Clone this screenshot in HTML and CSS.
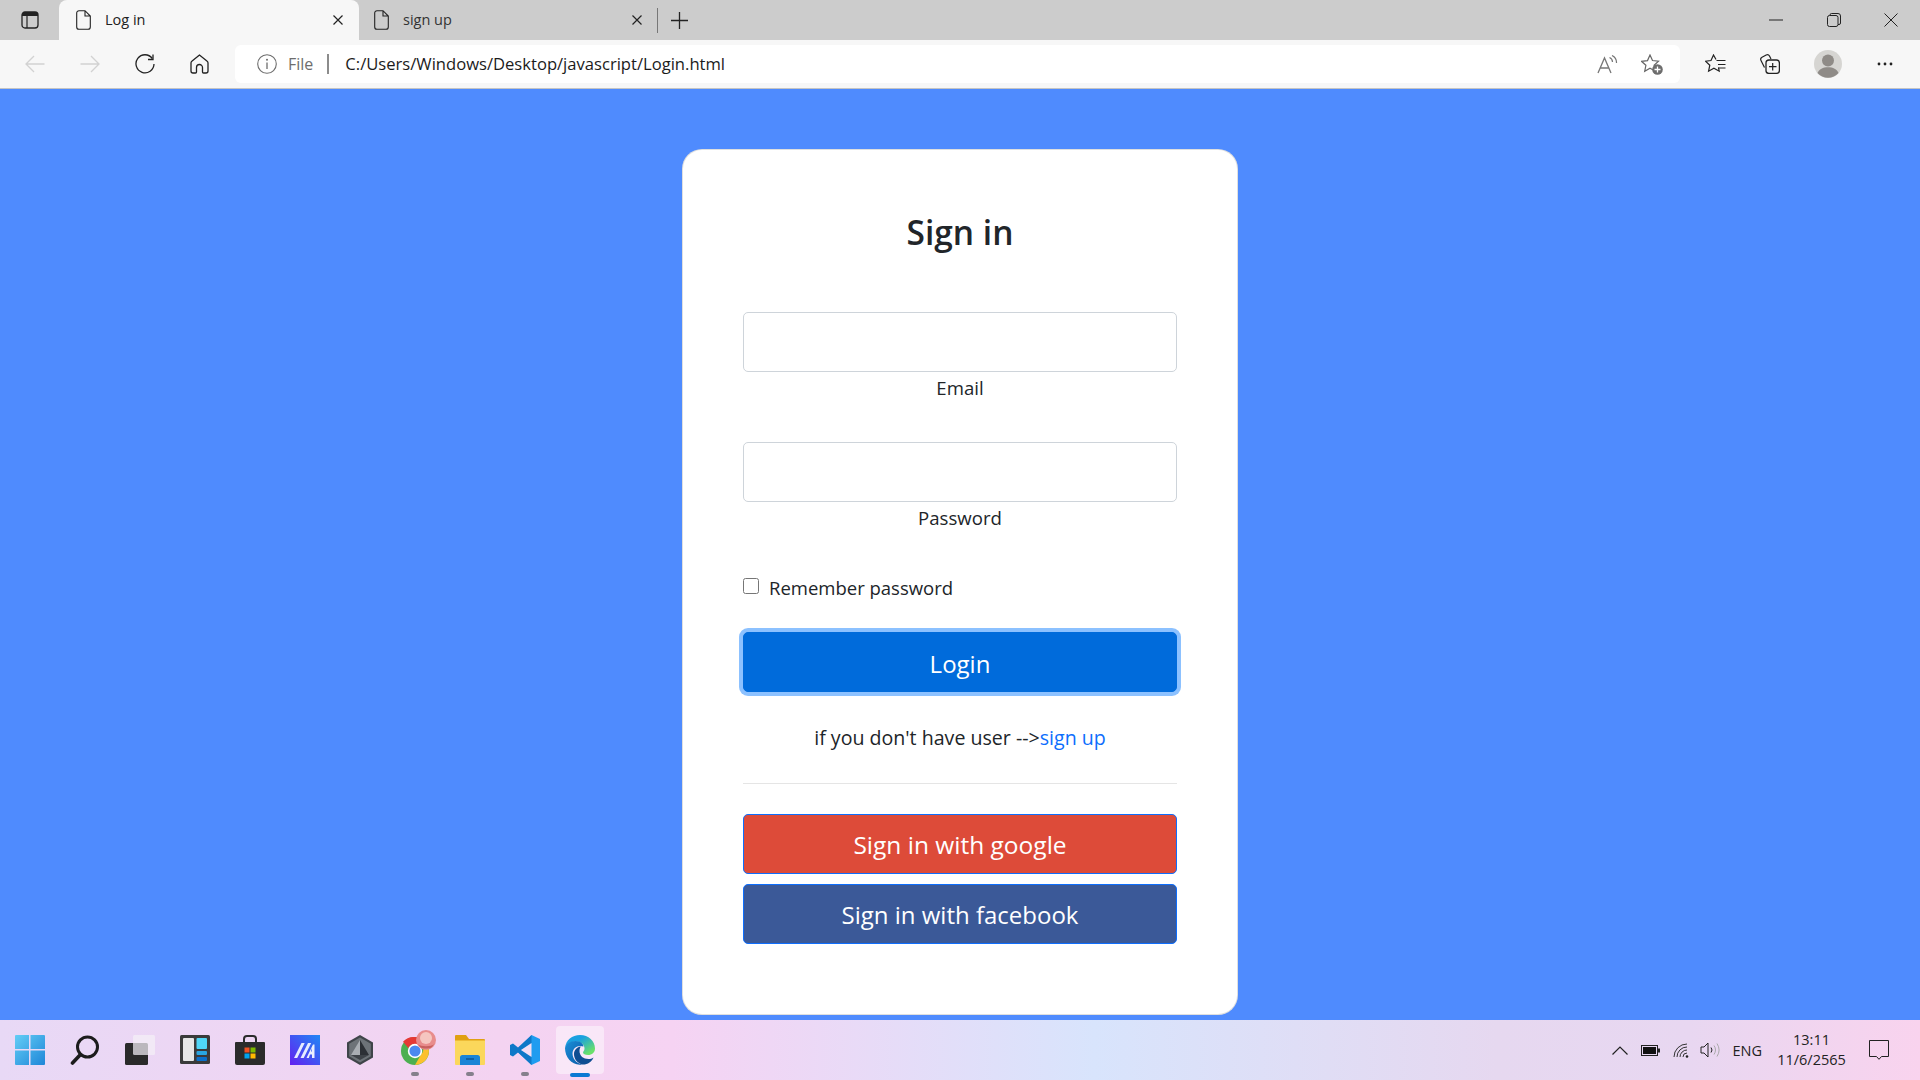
FILE: index.html
```html
<!DOCTYPE html>
<html lang="en">
<head>
  <meta charset="UTF-8" />
  <meta name="viewport" content="width=device-width, initial-scale=1.0"/>
  <title>Log in</title>
  <link rel="stylesheet" href="styles.css">
</head>
<body>
  <header class="tab-strip">
    <div class="sidebar-btn">
      <svg width="18" height="18" viewBox="0 0 18 18"><rect x="1" y="1" width="16" height="16" rx="3" fill="none" stroke="#222" stroke-width="1.3"/><path d="M1 5V4a3 3 0 0 1 3-3h10a3 3 0 0 1 3 3v1z" fill="#222"/><path d="M6 5v12" stroke="#222" stroke-width="1.2"/></svg>
    </div>
    <div class="tab tab-active">
      <svg class="page-icon" width="15" height="20" viewBox="0 0 15 20"><path d="M3 .7h6l5.300 5.300V17a2.300 2.300 0 0 1-2.300 2.300H3A2.300 2.300 0 0 1 .7 17V3A2.300 2.300 0 0 1 3 .7zM9 .7V6h5.300" fill="none" stroke="#222" stroke-width="1.1"/></svg>
      <span class="tab-title">Log in</span>
      <svg class="tab-close" width="10" height="10" viewBox="0 0 10 10"><path d="M.5.5l9 9M9.500.5l-9 9" stroke="#222" stroke-width="1.200"/></svg>
    </div>
    <div class="tab">
      <svg class="page-icon" width="15" height="20" viewBox="0 0 15 20"><path d="M3 .7h6l5.300 5.300V17a2.300 2.300 0 0 1-2.300 2.300H3A2.300 2.300 0 0 1 .7 17V3A2.300 2.300 0 0 1 3 .7zM9 .7V6h5.300" fill="none" stroke="#222" stroke-width="1.1"/></svg>
      <span class="tab-title">sign up</span>
      <svg class="tab-close" width="10" height="10" viewBox="0 0 10 10"><path d="M.5.5l9 9M9.500.5l-9 9" stroke="#222" stroke-width="1.200"/></svg>
    </div>
    <div class="tab-sep"></div>
    <div class="new-tab">
      <svg width="17" height="17" viewBox="0 0 17 17"><path d="M8.500 0v17M0 8.500h17" stroke="#222" stroke-width="1.300"/></svg>
    </div>
    <div class="window-btns">
      <div class="window-btn"><svg width="14" height="14" viewBox="0 0 14 14"><path d="M0 7h14" stroke="#222" stroke-width="1"/></svg></div>
      <div class="window-btn"><svg width="14" height="14" viewBox="0 0 14 14"><rect x=".5" y="2.500" width="10.500" height="11" rx="2" fill="none" stroke="#222"/><path d="M3 2.500V2a1.500 1.500 0 0 1 1.500-1.500H11A2.500 2.500 0 0 1 13.500 3v7a1.500 1.500 0 0 1-1.500 1.500h-1" fill="none" stroke="#222"/></svg></div>
      <div class="window-btn"><svg width="14" height="14" viewBox="0 0 14 14"><path d="M.5.5l13 13M13.500.5l-13 13" stroke="#222" stroke-width="1"/></svg></div>
    </div>
  </header>

  <nav class="toolbar">
    <div class="nav-btn"><svg width="20" height="18" viewBox="0 0 20 18"><path d="M19.500 9H1M9 1L1 9l8 8" fill="none" stroke="#d2d2d2" stroke-width="1.300"/></svg></div>
    <div class="nav-btn"><svg width="20" height="18" viewBox="0 0 20 18"><path d="M.5 9H19M11 1l8 8-8 8" fill="none" stroke="#d2d2d2" stroke-width="1.300"/></svg></div>
    <div class="nav-btn"><svg width="20" height="20" viewBox="0 0 20 20"><path d="M17.300 4.500A9 9 0 1 0 19 10" fill="none" stroke="#222" stroke-width="1.300"/><path d="M18 .5v5h-5" fill="none" stroke="#222" stroke-width="1.300"/></svg></div>
    <div class="nav-btn"><svg width="19" height="20" viewBox="0 0 19 20"><path d="M9.500 1L1.800 7.300A2 2 0 0 0 1 8.900V17a2 2 0 0 0 2 2h2.500a1 1 0 0 0 1-1v-4.500a3 3 0 0 1 6 0V18a1 1 0 0 0 1 1H16a2 2 0 0 0 2-2V8.900a2 2 0 0 0-.8-1.600z" fill="none" stroke="#222" stroke-width="1.300"/></svg></div>

    <div class="address-bar">
      <svg width="20" height="20" viewBox="0 0 20 20"><circle cx="10" cy="10" r="9.300" fill="none" stroke="#6d6d6d" stroke-width="1.100"/><path d="M10 8.500V15" stroke="#6d6d6d" stroke-width="1.300"/><circle cx="10" cy="5.700" r="1" fill="#6d6d6d"/></svg>
      <span class="scheme">File</span>
      <span class="scheme-sep"></span>
      <span class="url">C:/Users/Windows/Desktop/javascript/Login.html</span>
      <div class="address-icons">
        <svg width="21" height="19" viewBox="0 0 21 19"><path d="M1 18L7.500 3 14 18M3.300 13h8.400" fill="none" stroke="#777" stroke-width="1.300"/><path d="M12.500 2.500a5 5 0 0 1 3 4.500M15 .5a8 8 0 0 1 4.500 7.500" fill="none" stroke="#777" stroke-width="1.200"/></svg>
        <svg width="22" height="21" viewBox="0 0 22 21"><path d="M9 1l2.500 5.500 6 .7-4.400 4 1.200 6L9 14.300 3.700 17.300l1.200-6-4.400-4 6-.7z" fill="none" stroke="#666" stroke-width="1.200"/><circle cx="16.500" cy="15.500" r="5.300" fill="#6d6d6d"/><path d="M16.500 12.500v6M13.500 15.500h6" stroke="#fff" stroke-width="1.300"/></svg>
      </div>
    </div>

    <div class="toolbar-right">
      <div class="tool-btn"><svg width="21" height="20" viewBox="0 0 21 20"><path d="M11 5.500L8.500 1 6 6.500l-5.500.7 4.300 4-1.200 6 5.300-3 5.300 3-.7-3.500" fill="none" stroke="#222" stroke-width="1.200"/><path d="M11.500 6.500h9M13 10.500h7.500M13 14h7.500" stroke="#222" stroke-width="1.200"/></svg></div>
      <div class="tool-btn tool-collections"><svg width="20" height="20" viewBox="0 0 20 20"><path d="M4.500 13.500L1 6.500A2.500 2.500 0 0 1 2 3.200L6.200 1a2.500 2.500 0 0 1 3.300 1l1.500 3" fill="none" stroke="#222" stroke-width="1.200"/><rect x="6" y="6" width="13.400" height="13.400" rx="3" fill="none" stroke="#222" stroke-width="1.300"/><path d="M12.700 9v7.500M9 12.700h7.500" stroke="#222" stroke-width="1.200"/></svg></div>
      <div class="tool-btn tool-avatar"><svg width="28" height="28" viewBox="0 0 28 28"><circle cx="14" cy="14" r="14" fill="#d6d5d2"/><circle cx="14" cy="10.500" r="6" fill="#8f8b87"/><path d="M3.500 23c1.500-4 5.500-5.800 10.500-5.800s9 1.800 10.500 5.800a14 14 0 0 1-21 0z" fill="#8f8b87"/></svg></div>
      <div class="tool-btn"><svg width="16" height="4" viewBox="0 0 16 4"><circle cx="2" cy="2" r="1.400" fill="#222"/><circle cx="8" cy="2" r="1.400" fill="#222"/><circle cx="14" cy="2" r="1.400" fill="#222"/></svg></div>
    </div>
  </nav>

  <main class="page">
    <form class="card">
      <h3 class="card-title">Sign in</h3>
      <div class="field">
        <input type="email" id="email" class="form-control" />
        <label for="email">Email</label>
      </div>
      <div class="field">
        <input type="password" id="password" class="form-control" />
        <label for="password">Password</label>
      </div>
      <div class="remember">
        <input type="checkbox" id="remember" />
        <label for="remember">Remember password</label>
      </div>
      <button type="button" class="btn btn-login">Login</button>
      <p class="signup-text">if you don't have user --&gt;<a href="#">sign up</a></p>
      <hr class="divider" />
      <button type="button" class="btn btn-google">Sign in with google</button>
      <button type="button" class="btn btn-facebook">Sign in with facebook</button>
    </form>
  </main>

  <footer class="taskbar">
    <div class="task-item">
      <svg width="30" height="30" viewBox="0 0 30 30">
        <defs><linearGradient id="win" x1="0" y1="0" x2="1" y2="1"><stop offset="0" stop-color="#63cdf6"/><stop offset="1" stop-color="#1f86d8"/></linearGradient></defs>
        <path d="M1 0h13v14H0V1a1 1 0 0 1 1-1zM15.500 0H29a1 1 0 0 1 1 1v13H15.500zM0 15.500h14V30H1a1 1 0 0 1-1-1zM15.500 15.500H30V29a1 1 0 0 1-1 1H15.500z" fill="url(#win)"/>
      </svg>
    </div>
    <div class="task-item">
      <svg width="30" height="30" viewBox="0 0 30 30"><circle cx="17.500" cy="12" r="10" fill="none" stroke="#1c1c1c" stroke-width="3"/><path d="M10.500 19.500L2.500 28" stroke="#1c1c1c" stroke-width="3.600" stroke-linecap="round"/></svg>
    </div>
    <div class="task-item">
      <svg width="30" height="30" viewBox="0 0 30 30"><rect x="0" y="8" width="23" height="22" rx="1.500" fill="#2a2a2a"/><rect x="8" y="0" width="22" height="20" rx="1.500" fill="#f4f0f6" fill-opacity=".72"/></svg>
    </div>
    <div class="task-item">
      <svg width="30" height="30" viewBox="0 0 30 30"><rect width="30" height="29" rx="1.500" fill="#3a3a3a"/><rect x="3" y="3" width="11" height="23" rx="1" fill="#e6e6e6"/><rect x="16.500" y="3" width="10.500" height="11" rx="1" fill="#4fd6f6"/><rect x="16.500" y="16" width="10.500" height="4" rx="1" fill="#29a5e0"/><rect x="16.500" y="22" width="10.500" height="4" rx="1" fill="#0a6fc9"/></svg>
    </div>
    <div class="task-item">
      <svg width="30" height="30" viewBox="0 0 30 30"><path d="M9 8V4a3 3 0 0 1 3-3h6a3 3 0 0 1 3 3v4" fill="none" stroke="#2b2b2b" stroke-width="2"/><path d="M1 7h28a1 1 0 0 1 1 1v20a2 2 0 0 1-2 2H2a2 2 0 0 1-2-2V8a1 1 0 0 1 1-1z" fill="#2b2b2b"/><rect x="9.500" y="12.500" width="5" height="5" fill="#f25022"/><rect x="15.500" y="12.500" width="5" height="5" fill="#7fba00"/><rect x="9.500" y="18.500" width="5" height="5" fill="#00a4ef"/><rect x="15.500" y="18.500" width="5" height="5" fill="#ffb900"/></svg>
    </div>
    <div class="task-item">
      <svg width="30" height="30" viewBox="0 0 30 30">
        <defs><linearGradient id="nxt" x1="1" y1="0" x2="0" y2="1"><stop offset="0" stop-color="#2188f5"/><stop offset="1" stop-color="#6320f0"/></linearGradient></defs>
        <rect width="30" height="30" fill="url(#nxt)"/>
        <path d="M4 23L11.500 8h3.200L7.200 23zM10.500 23L18 8h3.200l-7.500 15z" fill="#e6ecff"/><path d="M16.500 23L23 9.500h1.500V23h-2.500v-3.500h-2L18.800 23zM21 16.500h1V13z" fill="#fff" fill-opacity=".9" fill-rule="evenodd"/>
      </svg>
    </div>
    <div class="task-item">
      <svg width="28" height="30" viewBox="0 0 28 30"><path d="M14 0l13 7.500v15L14 30 1 22.500v-15z" fill="#3f4449"/><path d="M14 2.500l10.800 6.200v12.600L14 27.500 3.200 21.300V8.700z" fill="#6d7378"/><path d="M14 5L5 20h9z" fill="#a9aeb3"/><path d="M14 5l9 15h-9z" fill="#2c3035"/><path d="M5 20h18l-9 5z" fill="#3e4348"/></svg>
    </div>
    <div class="task-item task-running">
      <svg class="chrome-icon" width="36" height="36" viewBox="0 0 36 36">
        <circle cx="14" cy="21" r="14" fill="#4caf50"/>
        <path d="M14 7a14 14 0 0 1 12.100 7H14a7 7 0 0 0-6.500 4.300L2 11.700A14 14 0 0 1 14 7z" fill="#e53935"/>
        <path d="M26.100 14A14 14 0 0 1 14 35l6-10.500A7 7 0 0 0 20 14z" fill="#fbc02d"/>
        <circle cx="14" cy="21" r="6.400" fill="#4b89f0" stroke="#fff" stroke-width="1.600"/>
        <circle cx="25" cy="10" r="10" fill="#e88c8c"/>
        <circle cx="25" cy="8" r="6" fill="#f5c6c0"/>
        <path d="M17 14c2 3 14 3 16 0l-2 3c-3 2-9 2-12 0z" fill="#c8605f"/>
      </svg>
    </div>
    <div class="task-item task-running">
      <svg width="30" height="30" viewBox="0 0 30 30"><path d="M1 0h10l3 4h15a1 1 0 0 1 1 1v3H0V1a1 1 0 0 1 1-1z" fill="#e0a012"/><path d="M0 5.500h30V29a1 1 0 0 1-1 1H1a1 1 0 0 1-1-1z" fill="#fbd75b"/><path d="M5 30v-7.500a2.500 2.500 0 0 1 2.500-2.500h15a2.500 2.500 0 0 1 2.500 2.500V30z" fill="#1a84d6"/><path d="M11 24h8" stroke="#0b4f8a" stroke-width="1.300"/></svg>
    </div>
    <div class="task-item task-running">
      <svg width="30" height="30" viewBox="0 0 30 30"><path d="M21.500 0L30 4v22l-8.500 4L8 17l13.500-17z" fill="#1f9cf0"/><path d="M21.500 0v8.500L11 15l10.500 6.500V30L8 17.500 3 21.500 0 20v-10l3-1.500 5 4z" fill="#0e78c8"/><path d="M21.500 8L11 15l10.500 7z" fill="#f3ddf4"/></svg>
    </div>
    <div class="task-item task-active">
      <svg width="30" height="30" viewBox="0 0 30 30">
        <defs>
          <linearGradient id="edgeTop" x1="0" y1="0" x2="1" y2="1"><stop offset=".35" stop-color="#1aa0e0"/><stop offset=".85" stop-color="#6ae06a"/></linearGradient>
          <linearGradient id="edgeBot" x1="0" y1="0" x2="1" y2="1"><stop offset="0" stop-color="#1a8fd8"/><stop offset="1" stop-color="#0b5aa8"/></linearGradient>
        </defs>
        <path d="M15 0c8.500 0 15 6 15 13.500 0 4-3 6.500-7 6.500-3 0-5-1-5-2.500 0-1 1.500-1.500 1.500-4C19.500 9.500 16 6.500 11 6.500 5 6.500 1 10 0 13 1 5 7 0 15 0z" fill="url(#edgeTop)"/>
        <path d="M0 13c1-4 5-7 10.500-7 5 0 8 3 8 5.500C13 9.500 7.500 13 7.500 18.500c0 5 3.500 9.500 9.500 11C7.500 31 0 23 0 13z" fill="url(#edgeBot)"/>
        <path d="M17 29.500c-5-1.500-8-6-8-10.500 0-4 3-7 7-7.500-1 1-1.500 2.500-1.500 4.500 0 5 4 8 9 8 2 0 3.500-.5 5-1.500C27 27 22 30 17 29.500z" fill="#0f4d92"/>
      </svg>
    </div>

    <div class="tray">
      <svg width="16" height="9" viewBox="0 0 16 9"><path d="M.5 8.500L8 1l7.500 7.500" fill="none" stroke="#222" stroke-width="1.200"/></svg>
      <svg class="tray-battery" width="19" height="11" viewBox="0 0 19 11"><rect x=".5" y=".5" width="16" height="10" fill="none" stroke="#222"/><rect x="2" y="2" width="13" height="7" fill="#111"/><rect x="17" y="3.500" width="2" height="4" fill="#222"/></svg>
      <svg class="tray-wifi" width="17" height="15" viewBox="0 0 17 15"><path d="M1 14A13 13 0 0 1 14 1M4 14A10 10 0 0 1 14 4M7 14a7 7 0 0 1 7-7M10 14a4 4 0 0 1 4-4" fill="none" stroke="#333" stroke-width="1"/><circle cx="14" cy="13.500" r="1.300" fill="#222"/></svg>
      <svg class="tray-volume" width="20" height="16" viewBox="0 0 20 16"><path d="M1 5h3l4-4v14l-4-4H1z" fill="none" stroke="#222" stroke-width="1"/><path d="M11 5.500a4 4 0 0 1 0 5" fill="none" stroke="#222"/><path d="M14 3.500a8 8 0 0 1 0 9M17 1.500a12 12 0 0 1 0 13" fill="none" stroke="#aaa"/></svg>
      <span class="tray-lang">ENG</span>
      <div class="tray-clock"><span>13:11</span><span>11/6/2565</span></div>
      <svg class="tray-notify" width="20" height="20" viewBox="0 0 20 20"><path d="M.5.5h19v16h-7L10 19.300 7.500 16.500h-7z" fill="none" stroke="#222" stroke-width="1"/></svg>
    </div>
  </footer>
</body>
</html>
```

FILE: styles.css
```css
* {
  box-sizing: border-box;
}

html, body {
  height: 100%;
}

body {
  margin: 0;
  display: flex;
  flex-direction: column;
  height: 1080px;
  overflow: hidden;
  font-family: "Open Sans", "Noto Sans", sans-serif;
  color: #212529;
  background: #4f8bfe;
}

svg {
  display: block;
  flex-shrink: 0;
}

/* browser tabs */
.tab-strip {
  display: flex;
  align-items: center;
  height: 40px;
  background: #cccccc;
  flex-shrink: 0;
}

.sidebar-btn {
  width: 59px;
  display: flex;
  justify-content: center;
}

.tab {
  display: flex;
  align-items: center;
  width: 298px;
  height: 40px;
  padding: 0 15px 0 15px;
  font-size: 14.5px;
  color: #333;
}

.tab-active {
  width: 300px;
  padding-left: 17px;
  padding-right: 16px;
  background: #f7f7f7;
  border-radius: 8px 8px 0 0;
  color: #222;
}

.page-icon {
  margin-right: 14px;
}

.tab-title {
  flex: 1;
  padding-bottom: 2px;
}

.tab-sep {
  width: 1px;
  height: 25px;
  background: #777;
}

.new-tab {
  margin-left: 13px;
}

.window-btns {
  display: flex;
  margin-left: auto;
}

.window-btn {
  width: 57.6px;
  height: 40px;
  display: flex;
  align-items: center;
  justify-content: center;
}

/* toolbar */
.toolbar {
  display: flex;
  align-items: center;
  height: 49px;
  padding-left: 7px;
  background: #f7f7f7;
  border-bottom: 1px solid #c4c4c4;
  flex-shrink: 0;
}

.nav-btn {
  width: 55px;
  display: flex;
  justify-content: center;
}

.address-bar {
  display: flex;
  align-items: center;
  width: 1445px;
  height: 38px;
  margin-left: 8px;
  padding: 0 17px 0 22px;
  background: #fff;
  border-radius: 6px;
}

.scheme {
  margin-left: 11px;
  font-size: 16px;
  color: #6d6d6d;
  padding-bottom: 1px;
}

.scheme-sep {
  width: 2px;
  height: 20px;
  margin: 0 16px 0 14px;
  background: #8c8c8c;
}

.url {
  flex: 1;
  font-size: 16.6px;
  color: #1b1b1b;
  padding-bottom: 1px;
}

.address-icons {
  display: flex;
  align-items: center;
  gap: 23px;
}

.toolbar-right {
  display: flex;
  align-items: center;
  margin-left: 7px;
}

.tool-btn {
  width: 56px;
  display: flex;
  justify-content: center;
}

.tool-collections svg {
  margin-right: 2px;
}

.tool-avatar {
  width: 58px;
}

/* login card */
.page {
  flex: 1;
  min-height: 0;
}

.card {
  width: 556px;
  height: 866px;
  margin: 60px auto 0;
  padding: 60px 60px 0;
  background: #fff;
  border: 1px solid rgba(0, 0, 0, 0.125);
  border-radius: 20px;
}

.card-title {
  margin: 0 0 60px;
  padding-top: 1px;
  height: 42px;
  font-size: 33.5px;
  font-weight: 600;
  line-height: 42px;
  text-align: center;
}

.field {
  margin-bottom: 40px;
  text-align: center;
  font-size: 18.6px;
  line-height: 30px;
}

.field label {
  display: block;
  height: 30px;
  padding-top: 1px;
}

.form-control {
  display: block;
  width: 100%;
  height: 60px;
  border: 1px solid #ced4da;
  border-radius: 5px;
  background: #fff;
}

.remember {
  display: flex;
  align-items: center;
  margin-top: 41px;
  font-size: 18.5px;
  line-height: 30px;
}

.remember input {
  width: 16px;
  height: 16px;
  margin: -4px 10px 0 0;
}

.btn {
  display: block;
  width: 100%;
  height: 60px;
  border: 1px solid #0d6efd;
  border-radius: 5px;
  font-family: inherit;
  font-size: 24px;
  color: #fff;
}

.btn-login {
  margin-top: 29px;
  padding-top: 4px;
  background: #006bdb;
  box-shadow: 0 0 0 4px #8cc1ff;
  border-color: #006bdb;
}

.signup-text {
  margin: 31px 0 30px;
  text-align: center;
  font-size: 19.6px;
  line-height: 30px;
}

.signup-text a {
  color: #0d6efd;
  text-decoration: none;
}

.divider {
  height: 1px;
  margin: 0 0 30px;
  border: 0;
  background: #e5e5e5;
}

.btn-google {
  background: #dd4b39;
  font-size: 24.5px;
  margin-bottom: 10px;
}

.btn-facebook {
  background: #3b5998;
}

/* windows taskbar */
.taskbar {
  display: flex;
  align-items: center;
  height: 60px;
  padding-left: 2px;
  flex-shrink: 0;
  background: linear-gradient(90deg, #e8d9f6 0%, #f4d3f1 26%, #f6d3f3 35%, #d8e4fc 57%, #e6d8f0 78%, #e8d7f1 88%, #f9d3ee 100%);
}

.task-item {
  position: relative;
  width: 55px;
  height: 60px;
  display: flex;
  align-items: center;
  justify-content: center;
}

.chrome-icon {
  margin-left: 8px;
  margin-top: -4px;
}

.task-running::after {
  content: "";
  position: absolute;
  left: 24px;
  bottom: 4px;
  width: 8px;
  height: 4px;
  border-radius: 2px;
  background: #85808c;
}

.task-active::before {
  content: "";
  position: absolute;
  left: 4px;
  top: 6px;
  width: 48px;
  height: 48px;
  border-radius: 4px;
  background: rgba(255, 255, 255, 0.45);
}

.task-active svg {
  position: relative;
}

.task-active::after {
  content: "";
  position: absolute;
  left: 18px;
  bottom: 3px;
  width: 20px;
  height: 4px;
  border-radius: 2px;
  background: #0a78d4;
}

.tray {
  display: flex;
  align-items: center;
  margin-left: auto;
  padding-right: 31px;
  height: 60px;
  color: #222;
}

.tray-battery {
  margin-left: 13px;
}

.tray-wifi {
  margin-left: 13px;
}

.tray-volume {
  margin-left: 10px;
}

.tray-lang {
  margin-left: 12px;
  font-size: 14.5px;
}

.tray-clock {
  display: flex;
  flex-direction: column;
  align-items: center;
  width: 67px;
  margin-left: 16px;
  font-size: 14.5px;
  line-height: 20px;
}

.tray-notify {
  margin-left: 24px;
}
```
